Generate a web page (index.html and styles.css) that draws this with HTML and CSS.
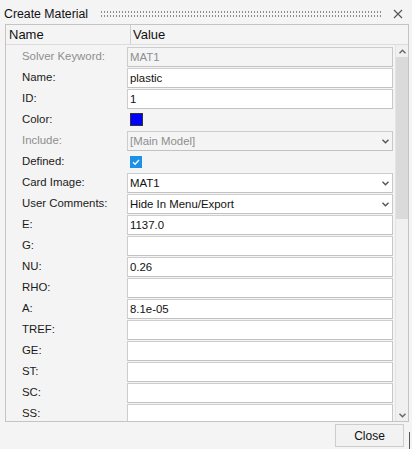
FILE: index.html
```html
<!DOCTYPE html>
<html lang="en">
<head>
    <meta charset="UTF-8">
    <meta name="viewport" content="width=device-width, initial-scale=1.0">
    <title>Create Material</title>
    <link rel="stylesheet" href="styles.css">
</head>
<body>
    <div class="dialog">
        <div class="titlebar">
            <span class="title">Create Material</span>
            <span class="grip"></span>
            <span class="close-x">
                <svg width="10" height="10" viewBox="0 0 10 10"><path d="M1 1L9 9M9 1L1 9" stroke="#555" stroke-width="1.1" fill="none"/></svg>
            </span>
        </div>

        <div class="table">
            <div class="head">
                <div class="head-name">Name</div>
                <div class="head-value">Value</div>
            </div>
            <div class="body">
                <div class="rows">
                    <div class="row disabled">
                        <div class="label">Solver Keyword:</div>
                        <div class="value"><div class="field">MAT1</div></div>
                    </div>
                    <div class="row">
                        <div class="label">Name:</div>
                        <div class="value"><div class="field white">plastic</div></div>
                    </div>
                    <div class="row">
                        <div class="label">ID:</div>
                        <div class="value"><div class="field white">1</div></div>
                    </div>
                    <div class="row">
                        <div class="label">Color:</div>
                        <div class="value"><span class="swatch"></span></div>
                    </div>
                    <div class="row disabled">
                        <div class="label">Include:</div>
                        <div class="value">
                            <div class="field select">[Main Model]
                                <svg class="chev" width="7" height="5" viewBox="0 0 7 5"><path d="M0.5 0.8L3.5 3.8L6.5 0.8" stroke="#555" stroke-width="1.4" fill="none"/></svg>
                            </div>
                        </div>
                    </div>
                    <div class="row">
                        <div class="label">Defined:</div>
                        <div class="value">
                            <span class="check">
                                <svg width="12" height="12" viewBox="0 0 12 12"><path d="M3 6.2L5.1 8.2L9 4" stroke="#fff" stroke-width="1.4" fill="none"/></svg>
                            </span>
                        </div>
                    </div>
                    <div class="row">
                        <div class="label">Card Image:</div>
                        <div class="value">
                            <div class="field white select">MAT1
                                <svg class="chev" width="7" height="5" viewBox="0 0 7 5"><path d="M0.5 0.8L3.5 3.8L6.5 0.8" stroke="#555" stroke-width="1.4" fill="none"/></svg>
                            </div>
                        </div>
                    </div>
                    <div class="row">
                        <div class="label">User Comments:</div>
                        <div class="value">
                            <div class="field white select">Hide In Menu/Export
                                <svg class="chev" width="7" height="5" viewBox="0 0 7 5"><path d="M0.5 0.8L3.5 3.8L6.5 0.8" stroke="#555" stroke-width="1.4" fill="none"/></svg>
                            </div>
                        </div>
                    </div>
                    <div class="row">
                        <div class="label">E:</div>
                        <div class="value"><div class="field white">1137.0</div></div>
                    </div>
                    <div class="row">
                        <div class="label">G:</div>
                        <div class="value"><div class="field white"></div></div>
                    </div>
                    <div class="row">
                        <div class="label">NU:</div>
                        <div class="value"><div class="field white">0.26</div></div>
                    </div>
                    <div class="row">
                        <div class="label">RHO:</div>
                        <div class="value"><div class="field white"></div></div>
                    </div>
                    <div class="row">
                        <div class="label">A:</div>
                        <div class="value"><div class="field white">8.1e-05</div></div>
                    </div>
                    <div class="row">
                        <div class="label">TREF:</div>
                        <div class="value"><div class="field white"></div></div>
                    </div>
                    <div class="row">
                        <div class="label">GE:</div>
                        <div class="value"><div class="field white"></div></div>
                    </div>
                    <div class="row">
                        <div class="label">ST:</div>
                        <div class="value"><div class="field white"></div></div>
                    </div>
                    <div class="row">
                        <div class="label">SC:</div>
                        <div class="value"><div class="field white"></div></div>
                    </div>
                    <div class="row">
                        <div class="label">SS:</div>
                        <div class="value"><div class="field white"></div></div>
                    </div>
                </div>
                <div class="scrollbar">
                    <div class="arrow">
                        <svg width="7" height="5" viewBox="0 0 7 5"><path d="M0.5 4.2L3.5 1.2L6.5 4.2" stroke="#666" stroke-width="1.4" fill="none"/></svg>
                    </div>
                    <div class="track"><div class="thumb"></div></div>
                    <div class="arrow">
                        <svg width="7" height="5" viewBox="0 0 7 5"><path d="M0.5 0.8L3.5 3.8L6.5 0.8" stroke="#666" stroke-width="1.4" fill="none"/></svg>
                    </div>
                </div>
            </div>
        </div>

        <div class="footer">
            <button class="close-btn">Close</button>
        </div>
        <span class="corner"></span>
    </div>
</body>
</html>
```

FILE: styles.css
```css
body {
    margin: 0;
    font-family: "Liberation Sans", Arial, sans-serif;
    font-size: 11.4px;
    color: #1a1a1a;
    background-color: #f4f4f4;
}
.dialog {
    position: relative;
    width: 412px;
    height: 449px;
    overflow: hidden;
}
.titlebar {
    display: flex;
    align-items: center;
    height: 24px;
    padding-left: 4px;
    box-sizing: border-box;
}
.title {
    font-size: 12.3px;
    color: #111;
    padding-top: 3px;
}
.grip {
    flex: 1;
    height: 7px;
    margin: 2px 12px 0 12px;
    background-image: radial-gradient(circle, #8a8a8a 0.8px, transparent 1px);
    background-size: 3px 4px;
}
.close-x {
    width: 10px;
    height: 10px;
    margin-right: 9px;
    margin-top: 4px;
}
.close-x svg {
    display: block;
}
.table {
    margin-left: 5px;
    width: 404px;
    border: 1px solid #c4c4c4;
    box-sizing: border-box;
    background: #f4f4f4;
}
.head {
    display: flex;
    height: 20px;
    border-bottom: 1px solid #dcdcdc;
    box-sizing: border-box;
    font-size: 13px;
    color: #111;
}
.head-name {
    width: 121px;
    padding-left: 3px;
    line-height: 19px;
    border-right: 1px solid #cfcfcf;
}
.head-value {
    padding-left: 2px;
    line-height: 19px;
}
.body {
    display: flex;
    height: 376px;
    overflow: hidden;
}
.rows {
    flex: 1;
    padding-top: 1px;
}
.row {
    display: flex;
    height: 21px;
}
.label {
    width: 121px;
    padding-left: 16px;
    line-height: 21px;
    box-sizing: border-box;
}
.row.disabled .label {
    color: #8e8e8e;
}
.value {
    flex: 1;
    margin-right: 2px;
    position: relative;
}
.field {
    height: 20px;
    margin-top: 1px;
    padding-left: 2px;
    line-height: 18px;
    border: 1px solid #cdcdcd;
    border-bottom-color: #c2c2c2;
    border-right-color: #c8c8c8;
    box-sizing: border-box;
    background: #f4f4f4;
    color: #111;
    position: relative;
}
.row.disabled .field {
    color: #8e8e8e;
}
.field.white {
    background: #fff;
}
.chev {
    position: absolute;
    right: 3px;
    top: 7px;
}
.swatch {
    display: block;
    width: 13px;
    height: 13px;
    margin: 4px 0 0 3px;
    background: #0000ff;
    border: 1px solid #333;
    box-sizing: border-box;
}
.check {
    display: block;
    width: 12px;
    height: 12px;
    margin: 5px 0 0 3px;
    background: #1c91e8;
}
.check svg {
    display: block;
}
.scrollbar {
    width: 13px;
    display: flex;
    flex-direction: column;
    background: #f0f0f0;
    border-left: 1px solid #e4e4e4;
    box-sizing: border-box;
}
.arrow {
    height: 12px;
    display: flex;
    align-items: center;
    justify-content: center;
}
.track {
    flex: 1;
}
.thumb {
    height: 162px;
    background: #dadada;
}
.footer {
    display: flex;
    justify-content: flex-end;
    padding: 2px 8px 0 0;
}
.close-btn {
    width: 69px;
    height: 23px;
    font-family: "Liberation Sans", Arial, sans-serif;
    font-size: 12px;
    color: #111;
    background: #f2f2f2;
    border: 1px solid #cdcdcd;
    padding: 0;
}
.corner {
    position: absolute;
    left: 409px;
    top: 432px;
    width: 1px;
    height: 17px;
    background: #555;
}
```
